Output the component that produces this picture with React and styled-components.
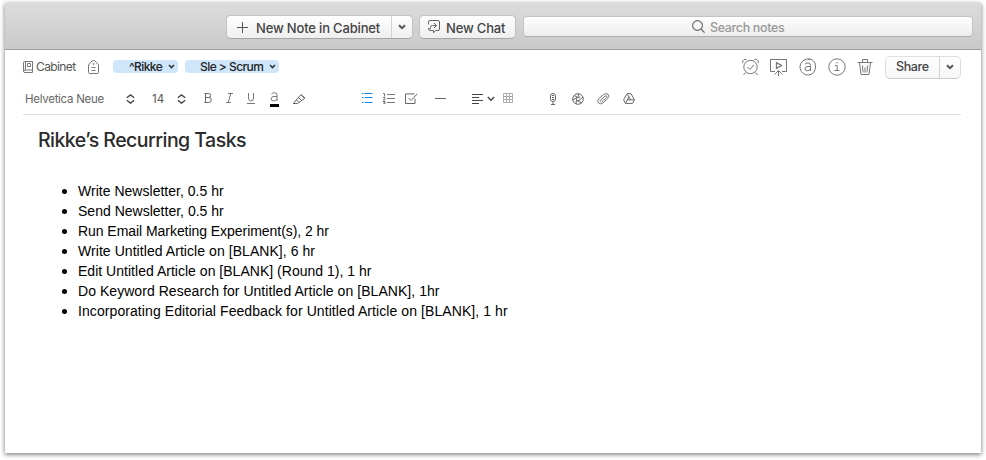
import React from "react";
import styled, { createGlobalStyle } from "styled-components";

const Global = createGlobalStyle`
  * { box-sizing: border-box; }
  html, body { margin: 0; background: #fff; overflow: hidden; }
`;

const Page = styled.div`
  width: 986px;
  height: 460px;
  padding: 3px 5px 7px;
  font-family: Inter, "Liberation Sans", sans-serif;
  color: #4a4a4a;
`;

const Window = styled.main`
  width: 976px;
  height: 450px;
  background: #fff;
  box-shadow: 0 1px 5px rgba(0, 0, 0, 0.4), 0 2px 4px rgba(0, 0, 0, 0.2);
`;

const TitleBar = styled.header`
  height: 47px;
  display: flex;
  align-items: flex-start;
  padding: 12px 8px 0 221px;
  background: linear-gradient(#dcdcdc, #c9c9c9);
  border-bottom: 1px solid #9b9b9b;
`;

const Button = styled.button`
  display: flex;
  align-items: center;
  flex: none;
  width: ${(p) => p.$w}px;
  height: ${(p) => p.$h || 24}px;
  margin: 0 ${(p) => p.$mr || 0}px 0 ${(p) => p.$ml || 0}px;
  padding: 0;
  font: inherit;
  color: #4a4a4a;
  background: linear-gradient(#fefefe, ${(p) => (p.$light ? "#f6f6f6" : "#efefef")});
  border: 1px solid ${(p) => (p.$light ? "#dedede" : "#c2c2c2")};
  border-bottom-color: ${(p) => (p.$light ? "#cbcbcb" : "#a5a5a5")};
  border-radius: 5px;
`;

const Split = styled.span`
  display: flex;
  align-items: center;
  justify-content: center;
  width: 21px;
  height: 100%;
  margin-left: auto;
  border-left: 1px solid #d2d2d2;
`;

const SearchBox = styled.div`
  display: flex;
  align-items: center;
  width: 450px;
  height: 21px;
  margin-top: 1px;
  padding-left: 168px;
  background: linear-gradient(#fefefe, #ededed);
  border: 1px solid #c4c4c4;
  border-bottom-color: #adadad;
  border-radius: 4px;
`;

const Label = styled.span`
  flex: none;
  white-space: pre;
  font-size: ${(p) => p.$size}px;
  line-height: 16px;
  letter-spacing: ${(p) => p.$ls || 0}px;
  font-weight: ${(p) => p.$weight || 400};
  color: ${(p) => p.$color || "#444"};
  width: ${(p) => (p.$w ? p.$w + "px" : "auto")};
  margin-left: ${(p) => p.$ml || 0}px;
  padding-top: ${(p) => p.$pt || 0}px;
`;

const MetaRow = styled.div`
  display: flex;
  align-items: center;
  height: 34px;
  padding: 0 20px 0 18px;
`;

const Pill = styled.span`
  display: flex;
  align-items: center;
  justify-content: space-between;
  width: ${(p) => p.$w}px;
  height: 13px;
  margin-left: ${(p) => p.$ml}px;
  margin-top: -1px;
  padding: 0 3px 0 ${(p) => p.$pl}px;
  background: #cfe5fa;
  border-radius: 4px;
`;

const Actions = styled.div`
  display: flex;
  align-items: center;
  margin-left: auto;
`;

const FormatBar = styled.div`
  display: flex;
  align-items: center;
  height: 31px;
  margin: 0 20px 0 18px;
  padding-left: 2px;
  border-bottom: 1px solid #e0e0e0;
`;

const Glyph = styled.svg`
  display: block;
  flex: none;
  width: ${(p) => p.$w}px;
  height: ${(p) => p.$h}px;
  margin-left: ${(p) => p.$ml || 0}px;
  margin-top: ${(p) => p.$mt || 0}px;
  fill: none;
  stroke: ${(p) => p.$c || "#777"};
  stroke-width: ${(p) => p.$s || 1};
`;

const Note = styled.article`
  padding: 13px 33px 0;
`;

const Title = styled.h1`
  margin: 0;
  font-size: 19.5px;
  line-height: 24px;
  font-weight: 450;
  letter-spacing: -0.53px;
  color: #2b2b2b;
`;

const Tasks = styled.ul`
  list-style: none;
  margin: 29px 0 0;
  padding: 0 0 0 24px;
`;

const Task = styled.li`
  display: flex;
  align-items: center;
  height: 20px;
  font-family: "Liberation Sans", sans-serif;
  font-size: 14px;
  line-height: 20px;
  letter-spacing: ${(p) => p.$ls}px;
  color: #000;
  white-space: pre;
  &::before {
    content: "";
    width: 5px;
    height: 5px;
    margin: 1px 11px 0 0;
    border-radius: 50%;
    background: #000;
  }
`;

function Icon({ w, h, children, ...rest }) {
  return (
    <Glyph $w={w} $h={h} viewBox={`0 0 ${w} ${h}`} {...rest}>
      {children}
    </Glyph>
  );
}

const Chevron = (p) => (
  <Icon w={8} h={6} $c="#555" $s={2} {...p}><path d="M1 1.2 4 4.2 7 1.2" /></Icon>
);
const PillChevron = () => (
  <Icon w={7} h={5} $c="#333" $s={1.6}><path d="M1 1 3.5 3.500 6 1" /></Icon>
);
const Stepper = (p) => (
  <Icon w={9} h={10} $c="#444" $s={1.3} {...p}><path d="M.8 3.700 4.500.9 8.200 3.700M.8 6.300 4.500 9.100 8.200 6.300" /></Icon>
);

const tasks = [
  ["Write Newsletter, 0.5 hr", 0.02],
  ["Send Newsletter, 0.5 hr", 0.01],
  ["Run Email Marketing Experiment(s), 2 hr", -0.05],
  ["Write Untitled Article on [BLANK], 6 hr", 0.06],
  ["Edit Untitled Article on [BLANK] (Round 1), 1 hr", 0.02],
  ["Do Keyword Research for Untitled Article on [BLANK], 1hr", 0.05],
  ["Incorporating Editorial Feedback for Untitled Article on [BLANK], 1 hr", 0.08],
];

export default function App() {
  return (
    <Page>
      <Global />
      <Window>
        <TitleBar>
          <Button $w={187} $mr={6}>
            <Icon w={11} h={11} $ml={10} $c="#555"><path d="M5.500 0v11M0 5.500h11" /></Icon>
            <Label $size={13} $ml={8} $pt={1} $ls={-0.17} $weight={450}>New Note in Cabinet</Label>
            <Split><Chevron /></Split>
          </Button>
          <Button $w={97} $mr={7}>
            <Icon w={12} h={14} $ml={8} $c="#666">
              <path d="M.5 4.500V2Q.5.5 2 .5h8Q11.500.5 11.500 2v7q0 1.500-1.500 1.500H7.500L5.500 12.800V10.500H2Q.5 10.500.5 9V8.500H2.500V7.500Q2.500 5.500 4.500 5.500H8.500M6 3 8.500 5.500 6 8" />
            </Icon>
            <Label $size={13} $ml={6} $pt={1} $ls={-0.18} $weight={450}>New Chat</Label>
          </Button>
          <SearchBox>
            <Icon w={13} h={13} $c="#666" $s={1.1}><circle cx="5.500" cy="5.500" r="4.900" /><path d="m9 9 3.600 3.600" /></Icon>
            <Label $size={12.5} $ml={5} $pt={2} $ls={-0.36} $weight={450} $color="#999">Search notes</Label>
          </SearchBox>
        </TitleBar>

        <MetaRow>
          <Icon w={10} h={12}>
            <path d="M.5 10V1.500q0-1 1-1h8v11H2Q.5 11.500.5 10.200T2 9h7.500M2.500.5V9M4.500 2.500h3v3h-3z" />
          </Icon>
          <Label $size={12} $ml={3} $w={40} $ls={-0.6} $weight={430} $color="#555">Cabinet</Label>
          <Icon w={11} h={14} $ml={12} $mt={-1}>
            <path d="M.5 12.500V5L4 .9Q5.500 .1 7 .9L10.500 5v7.500q0 1-1 1h-8q-1 0-1-1zM3.500 7.500h4M3.500 10.500h4" /><circle cx="5.500" cy="4" r=".6" />
          </Icon>
          <Pill $w={65} $ml={14} $pl={16}>
            <Label $size={12} $ls={-0.6} $weight={450} $color="#222">^Rikke</Label><PillChevron />
          </Pill>
          <Pill $w={94} $ml={7} $pl={15}>
            <Label $size={12} $ls={-0.55} $weight={450} $color="#222">Sle &gt; Scrum</Label><PillChevron />
          </Pill>
          <Actions>
            <Icon w={17} h={18}>
              <circle cx="8.500" cy="9" r="6.700" /><path d="m5.500 9 2.300 2.500L12 7M.7 5V3Q1.500 1 4.500 1.300M16.300 5V3Q15.500 1 12.500 1.300M3.500 14.500 1.500 17M13.500 14.500l2 2.500" />
            </Icon>
            <Icon w={17} h={18} $ml={11}>
              <path d="M5 13.500H.5v-12h16v12H12M.5 1.500h16M8.500 12.500v5.500M4.500 16.500 8.500 12.500l4 4" /><path d="M6.500 4.700v5.600L11.500 7.500z" strokeWidth="1.3" />
            </Icon>
            <Icon w={18} h={18} $ml={12}>
              <path d="M11.500 1.400A8 8 0 1 0 14.500 14.800M9 1Q14 .8 16 5 18 10 14.500 14.800M6 6.200Q7 5 9 5 11.500 5 11.500 7.500V13M11.500 8.500H9Q6 8.500 6 10.700 6 12.700 8.500 12.700 11 12.700 11.500 10.500" />
            </Icon>
            <Icon w={18} h={18} $ml={11}>
              <circle cx="9" cy="9" r="8.200" /><path d="M7 7.500h2.200v5M6.500 12.500H11.500M9 4v1.500" />
            </Icon>
            <Icon w={16} h={18} $ml={11}>
              <path d="M.5 4.500h15M5.500 4.500V1.500h5v3M2.500 4.500 4 16.500h8L13.500 4.500M6 14.500 5.500 7.500M8 14.500V9.500M10 14.500 10.500 7.500" />
            </Icon>
            <Button $w={76} $h={23} $ml={12} $light>
              <Label $size={12.5} $ml={10} $ls={-0.4} $weight={450}>Share</Label>
              <Split><Chevron /></Split>
            </Button>
          </Actions>
        </MetaRow>

        <FormatBar>
          <Label $size={11.5} $w={101} $ls={-0.28} $weight={430} $color="#666">Helvetica Neue</Label>
          <Stepper />
          <Label $size={11.5} $ml={17} $w={25} $color="#555">14</Label>
          <Stepper />
          <Icon w={8} h={10} $ml={18} $mt={-2} $c="#666"><path d="M1.500.5v9M.5.5h4.200q2 0 2 2t-2 2H1.500M4.700 4.500q2.600 0 2.600 2.500T4.700 9.500H.5" /></Icon>
          <Icon w={7} h={10} $ml={14} $mt={-2}><path d="M2 .5h5M0 9.500h5M4.800.5 2.200 9.500" /></Icon>
          <Icon w={8} h={11} $ml={14} $mt={-1}><path d="M1.500 0v5q0 3 2.500 3t2.500-3V0M0 10.500h8" /></Icon>
          <Icon w={9} h={15} $ml={15} $mt={1}>
            <path d="M1.500 2Q2.500.7 4.500.7q2.500 0 2.500 2.500V9M7 4.500H4Q1.200 4.500 1.200 6.700 1.200 9 3.700 9 6 9 7 7" /><path d="M0 13.500h9" stroke="#000" strokeWidth="3" />
          </Icon>
          <Icon w={13} h={10} $ml={14} $mt={-1} $c="#666"><path d="M0 9.500h4.500L11.500 4.500 8 .7 4 5 .5 9.500M3.500 6 6 8.500M5.500 3.700 8.700 6.500M8 .7 12 4" /></Icon>
          <Icon w={11} h={10} $ml={56} $mt={-2} $c="#1786e0"><path d="M0 .5h1.500M2.500.5h8M0 4.500h1.500M2.500 4.500h8M0 9.500h1.500M2.500 9.500h8" /></Icon>
          <Icon w={12} h={11} $ml={10} $mt={-2}><path d="M4 1.500h8M4 5.500h8M4 9.500h8M0 .5h1.500v3M0 4.500h2v1.200L.3 7H2.300M0 8.500h2V11H0M.5 9.700H2" /></Icon>
          <Icon w={13} h={11} $ml={10} $mt={-1} $c="#666"><path d="M9.500.9H.5v9.600h9.500V5.500M3.500 5 6 7.500 12.300.8" /></Icon>
          <Icon w={12} h={3} $ml={17} $mt={-2} $c="#666"><path d="M0 1.500h11" /></Icon>
          <Icon w={12} h={11} $ml={25} $mt={0} $c="#444"><path d="M0 .5h11M0 3.500h7M0 6.500h11M0 9.500h7" /></Icon>
          <Icon w={8} h={6} $ml={3} $c="#444" $s={1.3}><path d="M.8 1 4 4.300 7.200 1" /></Icon>
          <Icon w={11} h={11} $ml={8} $mt={-1} $c="#aaa"><path d="M.5.5h9v9h-9zM.5 3.500h9M.5 6.500h9M3.500.5v9M6.500.5v9" /></Icon>
          <Icon w={6} h={12} $ml={36} $mt={-1} $c="#666"><rect x=".5" y=".5" width="5" height="8" rx="2.500" /><path d="M3 9v2.500M1 11.500h4M2 2.500h2M2 4.500h2M2 6.500h2" /></Icon>
          <Icon w={12} h={12} $ml={16} $mt={-1} $c="#666"><circle cx="6" cy="6" r="5.300" /><path d="M6 .7 7.500 5M11 4 7 7.500M10 10 5 7.500M4 11 4.500 6.500M.8 7 5 4.500M2 2.500 7.500 5M4.500 6.500 5 4.500M5 7.500 7 7.500" /></Icon>
          <Icon w={13} h={12} $ml={13} $mt={-1} $c="#777"><path d="M1 9.500Q0 7.500 2 5.500L6.500 1.700Q9-.2 11 1.200 13 3 10.500 5.700L6 9.900Q3 12 1 9.500M3.500 8.800Q2.500 7.800 4 6.500L8 3.200Q9.500 2.500 10 3.500 10 4.500 9 5.200L5 8.500" /></Icon>
          <Icon w={12} h={11} $ml={13} $mt={-1} $c="#666"><path d="M4 .7h4L11.400 6.800 9.500 10.400h-7L.6 6.800zM4.500 1.500 7.800 6.900M6 3.800 2.500 10.400M4.500 6.900H11.400" /></Icon>
        </FormatBar>

        <Note>
          <Title>Rikke’s Recurring Tasks</Title>
          <Tasks>
            {tasks.map(([text, ls]) => <Task key={text} $ls={ls}>{text}</Task>)}
          </Tasks>
        </Note>
      </Window>
    </Page>
  );
}
